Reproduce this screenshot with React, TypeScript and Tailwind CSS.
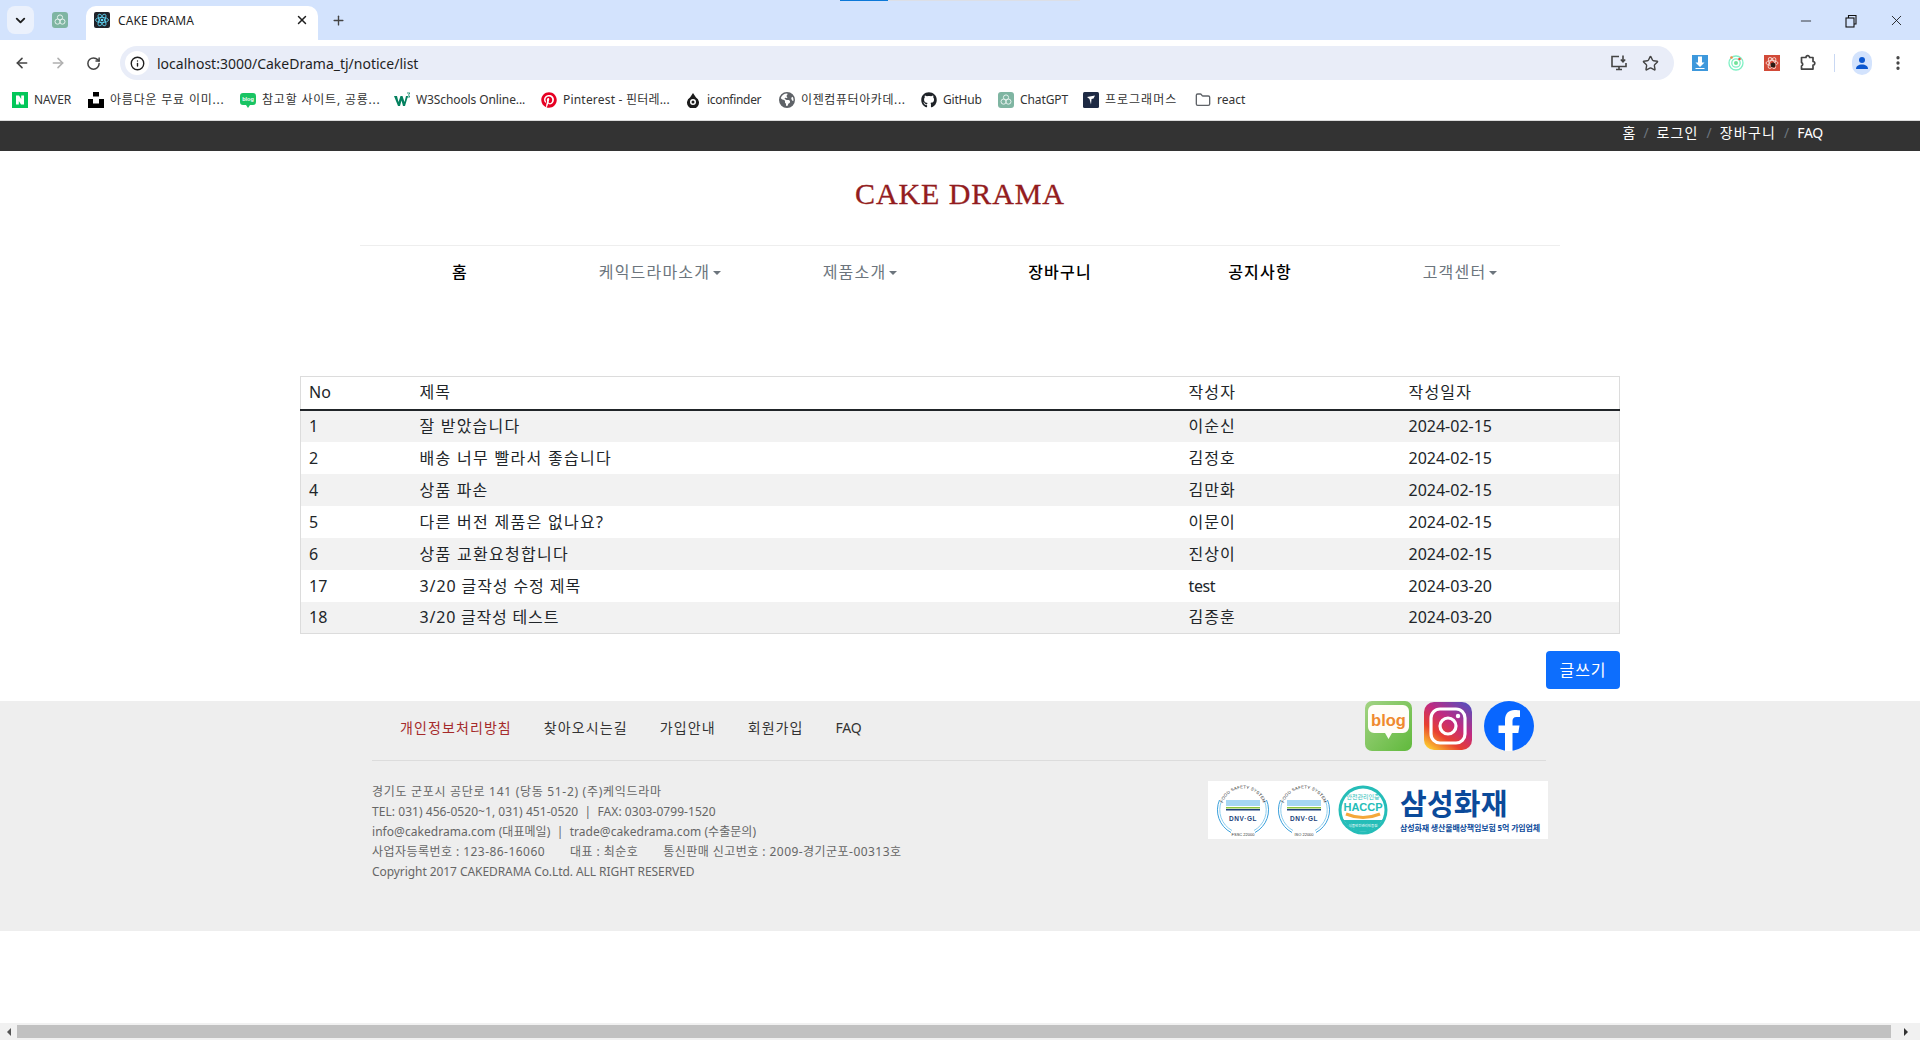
import { ArrowLeft, ArrowRight, ChevronDown, EllipsisVertical, Folder, Info, Minus, Plus, RotateCw, Star, X } from "lucide-react"
import { FaGithub, FaPinterest, FaEarthAmericas } from "react-icons/fa6"

const notices = [
  { no: 1, title: "잘 받았습니다", writer: "이순신", date: "2024-02-15", tt: "tracking-[1.2px]", wt: "tracking-[1px]" },
  { no: 2, title: "배송 너무 빨라서 좋습니다", writer: "김정호", date: "2024-02-15", tt: "tracking-[1.3px]", wt: "tracking-[1px]" },
  { no: 4, title: "상품 파손", writer: "김만화", date: "2024-02-15", tt: "tracking-[1.2px]", wt: "tracking-[1px]" },
  { no: 5, title: "다른 버전 제품은 없나요?", writer: "이문이", date: "2024-02-15", tt: "tracking-[1.3px]", wt: "tracking-[1px]" },
  { no: 6, title: "상품 교환요청합니다", writer: "진상이", date: "2024-02-15", tt: "tracking-[1.3px]", wt: "tracking-[1px]" },
  { no: 17, title: "3/20 글작성 수정 제목", writer: "test", date: "2024-03-20", tt: "tracking-[0.9px]", wt: "tracking-[-0.4px]" },
  { no: 18, title: "3/20 글작성 테스트", writer: "김종훈", date: "2024-03-20", tt: "tracking-[0.8px]", wt: "tracking-[1px]" },
]

const menu = [
  { name: "홈", cls: "text-black font-medium" },
  { name: "케익드라마소개", cls: "text-[#6c757d]", drop: true },
  { name: "제품소개", cls: "text-[#6c757d]", drop: true },
  { name: "장바구니", cls: "text-black font-medium" },
  { name: "공지사항", cls: "text-black font-medium" },
  { name: "고객센터", cls: "text-[#6c757d]", drop: true },
]

function GptIcon({ size = 16 }: { size?: number }) {
  return (
    <svg width={size} height={size} viewBox="0 0 16 16">
      <rect width="16" height="16" rx="3" fill="#7fb5a2" />
      <g fill="none" stroke="#e6f2ee" strokeWidth="1">
        <circle cx="8" cy="5.5" r="2.6" />
        <circle cx="5.6" cy="9.6" r="2.6" />
        <circle cx="10.4" cy="9.6" r="2.6" />
      </g>
    </svg>
  )
}

function ReactIcon() {
  return (
    <svg width="16" height="16" viewBox="0 0 16 16">
      <rect width="16" height="16" rx="2" fill="#20232a" />
      <g fill="none" stroke="#61dafb" strokeWidth="0.8">
        <ellipse cx="8" cy="8" rx="6.5" ry="2.6" />
        <ellipse cx="8" cy="8" rx="6.5" ry="2.6" transform="rotate(60 8 8)" />
        <ellipse cx="8" cy="8" rx="6.5" ry="2.6" transform="rotate(120 8 8)" />
      </g>
      <circle cx="8" cy="8" r="1.3" fill="#61dafb" />
    </svg>
  )
}

function BookmarkIcon({ kind }: { kind: string }) {
  if (kind === "naver")
    return (
      <svg width="16" height="16" viewBox="0 0 16 16">
        <rect width="16" height="16" fill="#03c75a" />
        <path d="M4 3.5h3l2.2 3.6V3.5H12v9H9l-2.2-3.6v3.6H4z" fill="#fff" />
      </svg>
    )
  if (kind === "unsplash")
    return (
      <svg width="16" height="16" viewBox="0 0 16 16">
        <path d="M5 0h6v4.5H5zM0 7h5v4.500h6V7h5v9H0z" fill="#000" />
      </svg>
    )
  if (kind === "blog")
    return (
      <svg width="16" height="16" viewBox="0 0 16 16">
        <path d="M3 1h10a3 3 0 0 1 3 3v6a3 3 0 0 1-3 3h-3l-2 3-2-3H3a3 3 0 0 1-3-3V4a3 3 0 0 1 3-3z" fill="#19c463" />
        <text x="8" y="9" textAnchor="middle" fontSize="5.500" fontWeight="700" fill="#fff" fontFamily="Liberation Sans">blog</text>
      </svg>
    )
  if (kind === "w3")
    return (
      <svg width="16" height="16" viewBox="0 0 16 16">
        <path d="M0 4h3l1.500 6L6.500 4h2l2 6L12 4h2l-3 10H9L7.500 8.500 6 14H4z" fill="#04815f" />
        <path d="M13 1h3l-1.500 2L16 5h-3" fill="none" stroke="#04815f" strokeWidth="0.8" />
      </svg>
    )
  if (kind === "pinterest") return <FaPinterest size={16} color="#e60023" />
  if (kind === "iconfinder")
    return (
      <svg width="16" height="16" viewBox="0 0 16 16">
        <path d="M8 1l3 4.500a6 6 0 1 1-6 0z" fill="#1b1b1b" />
        <circle cx="8" cy="10" r="3" fill="#fff" />
        <circle cx="8" cy="10" r="1.500" fill="#1b1b1b" />
      </svg>
    )
  if (kind === "globe") return <FaEarthAmericas size={16} color="#5f6368" />
  if (kind === "github") return <FaGithub size={16} color="#1f2328" />
  if (kind === "gpt") return <GptIcon />
  if (kind === "programmers")
    return (
      <svg width="16" height="16" viewBox="0 0 16 16">
        <rect width="16" height="16" rx="1.500" fill="#1e2a44" />
        <path d="M4 5l8-1.500-1.500 3L8.500 7 8 12.500 6.500 7z" fill="#fff" />
      </svg>
    )
  return <Folder size={16} color="#5f6368" strokeWidth={2} />
}

const bookmarks = [
  { kind: "naver", text: "NAVER", w: "w-[76px]", t: "tracking-[-0.1px]" },
  { kind: "unsplash", text: "아름다운 무료 이미...", w: "w-[152px]", t: "tracking-[0.8px]" },
  { kind: "blog", text: "참고할 사이트, 공룡...", w: "w-[154px]", t: "tracking-[0.8px]" },
  { kind: "w3", text: "W3Schools Online...", w: "w-[147px]", t: "tracking-[-0.1px]" },
  { kind: "pinterest", text: "Pinterest - 핀터레...", w: "w-[144px]", t: "tracking-[0.2px]" },
  { kind: "iconfinder", text: "iconfinder", w: "w-[94px]", t: "tracking-[-0.3px]" },
  { kind: "globe", text: "이젠컴퓨터아카데...", w: "w-[142px]", t: "tracking-[0.6px]" },
  { kind: "github", text: "GitHub", w: "w-[77px]", t: "tracking-[-0.2px]" },
  { kind: "gpt", text: "ChatGPT", w: "w-[85px]", t: "tracking-[-0.1px]" },
  { kind: "programmers", text: "프로그래머스", w: "w-[112px]", t: "tracking-[1px]" },
  { kind: "folder", text: "react", w: "w-[60px]", t: "tracking-normal" },
]

function Address() {
  return (
    <div className="mt-[1px] text-[12px] leading-[20px] text-[#666]">
      <p className="tracking-[0.7px]">경기도 군포시 공단로 141 (당동 51-2) (주)케익드라마</p>
      <p className="tracking-[0.05px]">TEL: 031) 456-0520~1, 031) 451-0520 &nbsp;|&nbsp; FAX: 0303-0799-1520</p>
      <p className="tracking-[0.05px]">info@cakedrama.com (대표메일) &nbsp;|&nbsp; trade@cakedrama.com (수출문의)</p>
      <p className="tracking-[0.45px]">사업자등록번호 : 123-86-16060 &nbsp; &nbsp; &nbsp; 대표 : 최순호 &nbsp; &nbsp; &nbsp; 통신판매 신고번호 : 2009-경기군포-00313호</p>
      <p className="tracking-[-0.07px]">Copyright 2017 CAKEDRAMA Co.Ltd. ALL RIGHT RESERVED</p>
    </div>
  )
}

function Social() {
  return (
    <div className="flex items-center gap-[12px] pr-[12px]">
      <svg width="47" height="50" viewBox="0 0 47 50">
        <defs>
          <linearGradient id="blogbg" x1="0" y1="0" x2="1" y2="1">
            <stop offset="0" stopColor="#a3d383" />
            <stop offset="1" stopColor="#60b93c" />
          </linearGradient>
        </defs>
        <rect width="47" height="50" rx="7" fill="url(#blogbg)" />
        <path d="M9 4h29a6 6 0 0 1 6 6v16a6 6 0 0 1-6 6H27l-3.500 6-3.500-6H9a6 6 0 0 1-6-6V10a6 6 0 0 1 6-6z" fill="#fffdf8" />
        <text x="23.500" y="25" textAnchor="middle" fontSize="16.500" fontWeight="700" fill="#ef8a2e" fontFamily="Liberation Sans">blog</text>
      </svg>
      <svg width="48" height="48" viewBox="0 0 48 48">
        <defs>
          <linearGradient id="igbg" x1="0.15" y1="1" x2="0.85" y2="0">
            <stop offset="0" stopColor="#fdcb2e" />
            <stop offset="0.3" stopColor="#e8402f" />
            <stop offset="0.6" stopColor="#c22a80" />
            <stop offset="1" stopColor="#5a4dbb" />
          </linearGradient>
        </defs>
        <rect width="48" height="48" rx="10" fill="url(#igbg)" />
        <rect x="7" y="7" width="34" height="34" rx="9" fill="none" stroke="#fff" strokeWidth="3.200" />
        <circle cx="24" cy="24" r="8" fill="none" stroke="#fff" strokeWidth="3.200" />
        <circle cx="34" cy="14" r="2.200" fill="#fff" />
      </svg>
      <svg width="50" height="50" viewBox="0 0 50 50">
        <circle cx="25" cy="25" r="25" fill="#0866ff" />
        <path d="M21 50V32h-6.500v-7.500H21v-5.500c0-6.500 3.800-10 9.500-10 2.800 0 5 .3 5.500.4v6.500h-3.500c-3 0-4 1.900-4 3.900v4.700h7l-1.200 7.500H28.500v18a25 25 0 0 1-7.500 0z" fill="#fff" />
      </svg>
    </div>
  )
}

function SafetySeal({ id, label }: { id: string; label: string }) {
  return (
    <svg width="54" height="54" viewBox="0 0 54 54">
      <defs>
        <path id={id} d="M5.500 27A21.500 21.500 0 0 1 48.500 27" />
      </defs>
      <g fill="none" stroke="#3aa0dc" strokeWidth="1">
        <path d="M3.500 17A25.500 25.500 0 0 0 15 49.500" />
        <path d="M50.500 17A25.500 25.500 0 0 1 39 49.500" />
      </g>
      <g fill="none" stroke="#8ccdee" strokeWidth="1">
        <path d="M5.500 18A23.500 23.500 0 0 0 16 47.500" />
        <path d="M48.500 18A23.500 23.500 0 0 1 38 47.500" />
      </g>
      <text fontSize="4.300" fill="#333" fontFamily="Liberation Sans" letterSpacing="0.2">
        <textPath href={`#${id}`} startOffset="50%" textAnchor="middle">FOOD SAFETY SYSTEM</textPath>
      </text>
      <rect x="10" y="17" width="34" height="6" fill="#a5d6f2" />
      <rect x="10" y="24" width="34" height="1.500" fill="#8cc63f" />
      <rect x="10" y="26" width="34" height="1.500" fill="#1c3f78" />
      <text x="27" y="37.500" textAnchor="middle" fontSize="6.500" fontWeight="700" fill="#1c3f78" fontFamily="Liberation Sans" letterSpacing="0.5">DNV·GL</text>
      <text x="27" y="52.500" textAnchor="middle" fontSize="4" fill="#333" fontFamily="Liberation Sans">{label}</text>
    </svg>
  )
}

function Certificates() {
  return (
    <div className="flex items-center w-[340px] h-[58px] bg-white -mr-[2px] pl-[8px]">
      <SafetySeal id="seal-a" label="FSSC 22000" />
      <div className="ml-[7px]">
        <SafetySeal id="seal-b" label="ISO 22000" />
      </div>
      <svg className="ml-[7px]" width="50" height="50" viewBox="0 0 50 50">
        <circle cx="25" cy="25" r="24.500" fill="#25bdb8" />
        <circle cx="25" cy="25" r="21.500" fill="#fff" />
        <path d="M5.500 35a22 22 0 0 0 39 0z" fill="#25bdb8" />
        <text x="25" y="14" textAnchor="middle" fontSize="6" fill="#25bdb8">안전관리인증</text>
        <text x="25" y="26" textAnchor="middle" fontSize="11" fontWeight="700" fill="#25bdb8" fontFamily="Liberation Sans">HACCP</text>
        <path d="M8 29q17 7 34 0" fill="none" stroke="#f4a73a" strokeWidth="3" />
        <text x="25" y="42" textAnchor="middle" fontSize="3.500" fill="#fff">식품안전관리인증원</text>
      </svg>
      <div className="ml-[12px] flex flex-col gap-[2px] text-[#0b4a9a] font-bold">
        <span className="text-[29px] leading-[34px] tracking-[0.2px]">삼성화재</span>
        <span className="text-[8px] leading-[10px] whitespace-nowrap tracking-[-0.15px]">삼성화재 생산물배상책임보험 5억 가입업체</span>
      </div>
    </div>
  )
}

export default function App() {
  return (
    <div className="w-[1920px] h-[1040px] overflow-hidden flex flex-col bg-white relative [font-family:'Noto_Sans','Noto_Sans_CJK_KR',sans-serif]">
      {/* tab strip */}
      <div className="h-[40px] bg-[#d3e3fd] flex items-end relative shrink-0">
        <div className="absolute top-0 left-[840px] w-[48px] h-[1px] bg-[#0b78d8]" />
        <div className="absolute top-0 left-[888px] w-[192px] h-[1px] bg-[#dcdfe6]" />
        <div className="self-start mt-[6px] ml-[7px] w-[27px] h-[28px] rounded-[8px] bg-[#ebf1fc] flex items-center justify-center">
          <ChevronDown size={15} strokeWidth={3} color="#1f1f1f" />
        </div>
        <div className="self-start mt-[12px] ml-[18px] w-[16px]">
          <GptIcon />
        </div>
        <div className="ml-[18px] w-[232px] h-[34px] bg-white rounded-t-[10px] flex items-center pl-[8px] pr-[9px] pb-[6px]">
          <ReactIcon />
          <span className="ml-[8px] mt-[1px] text-[12px] text-[#1f1f1f] flex-1 tracking-[0.1px]">CAKE DRAMA</span>
          <X size={14} strokeWidth={2.5} color="#1f1f1f" />
        </div>
        <div className="self-start mt-[13px] ml-[13px]">
          <Plus size={15} strokeWidth={2.2} color="#444" />
        </div>
        <div className="ml-auto self-start mt-[12px] flex items-center gap-[29px] pr-[15px] text-[#111]">
          <Minus size={16} strokeWidth={1.2} />
          <svg width="16" height="16" viewBox="0 0 16 16" fill="none" stroke="#111" strokeWidth="1.100">
            <rect x="3" y="5" width="8" height="9" />
            <path d="M5.500 5V2.500h7.500V11h-2" />
          </svg>
          <X size={17} strokeWidth={1.2} />
        </div>
      </div>

      {/* toolbar */}
      <div className="h-[46px] bg-white rounded-t-[8px] flex items-start pt-[6px] shrink-0 relative">
        <div className="w-[120px] h-[34px] flex items-center pl-[14px] gap-[20px]">
          <ArrowLeft size={16} strokeWidth={2.4} color="#444" />
          <ArrowRight size={16} strokeWidth={2.4} color="#b0b0b0" />
          <RotateCw size={15} strokeWidth={2.4} color="#444" />
        </div>
        <div className="w-[1554px] h-[34px] rounded-full bg-[#e9edf8] flex items-center pl-[5px]">
          <div className="w-[24px] h-[24px] rounded-full bg-white flex items-center justify-center">
            <Info size={15} strokeWidth={2.2} color="#1f1f1f" />
          </div>
          <span className="ml-[8px] text-[14px] text-[#1f1f1f] flex-1">localhost:3000/CakeDrama_tj/notice/list</span>
          <svg width="18" height="18" viewBox="0 0 18 18" fill="none" stroke="#444" strokeWidth="1.600">
            <path d="M9 2.500H2v10h14V9" />
            <path d="M6 15.500h6M9 12.500v3" />
            <path d="M13 1.500v6M10.800 5.500 13 7.800l2.200-2.300" />
          </svg>
          <Star className="ml-[14px] mr-[15px]" size={17} strokeWidth={2} color="#444" />
        </div>
        <div className="flex items-center h-[34px]">
          <svg className="ml-[18px]" width="16" height="16" viewBox="0 0 16 16">
            <rect width="16" height="16" fill="#3d98dc" />
            <path d="M6 1.500h4v6h2.500L8 12 3.500 7.500H6zM3.500 13h9v1h-9z" fill="#fff" />
          </svg>
          <svg className="ml-[20px]" width="16" height="16" viewBox="0 0 16 16" fill="none">
            <circle cx="8" cy="8" r="7" stroke="#7ff0c4" strokeWidth="1.300" />
            <circle cx="8" cy="8" r="4.200" stroke="#7ff0c4" strokeWidth="1.300" />
            <circle cx="8" cy="8" r="2" fill="#72e29a" />
            <circle cx="3.500" cy="2.500" r="1.300" fill="#f08a4b" />
            <circle cx="11.500" cy="4" r="1.300" fill="#ee4b3a" />
          </svg>
          <svg className="ml-[20px]" width="16" height="16" viewBox="0 0 16 16">
            <rect width="16" height="16" fill="#d24a38" />
            <g fill="none" stroke="#f6d8d2" strokeWidth="0.900">
              <ellipse cx="8" cy="8" rx="6" ry="2.500" />
              <ellipse cx="8" cy="8" rx="6" ry="2.500" transform="rotate(60 8 8)" />
              <ellipse cx="8" cy="8" rx="6" ry="2.500" transform="rotate(120 8 8)" />
            </g>
            <circle cx="9" cy="10" r="2.500" fill="#2a1a14" />
          </svg>
          <svg className="ml-[19px]" width="18" height="18" viewBox="0 0 18 18" fill="none" stroke="#444" strokeWidth="1.700">
            <path d="M2.500 3.500H7a1.800 1.800 0 0 1 3.600 0H14v4a1.800 1.800 0 0 1 0 3.600v4H2.500V12a1.800 1.800 0 0 0 0-3.400z" strokeLinejoin="round" />
          </svg>
          <div className="ml-[17px] w-[1px] h-[18px] bg-[#c9d8f3]" />
          <div className="ml-[17px] w-[20px] h-[24px] rounded-full bg-[#d3e3fd] flex items-center justify-center">
            <svg width="14" height="14" viewBox="0 0 14 14" fill="#0b57d0">
              <circle cx="7" cy="4" r="3" />
              <path d="M1 13c0-3 2.500-4.500 6-4.500s6 1.500 6 4.500z" />
            </svg>
          </div>
          <EllipsisVertical className="ml-[17px]" size={18} strokeWidth={2.4} color="#444" />
        </div>
      </div>

      {/* bookmarks */}
      <div className="h-[34px] bg-white flex items-center pl-[12px] pb-[6px] text-[12px] text-[#333] shrink-0">
        {bookmarks.map((b) => (
          <div key={b.text} className={`${b.w} flex items-center gap-[6px] whitespace-nowrap shrink-0`}>
            <BookmarkIcon kind={b.kind} />
            <span className={b.t}>{b.text}</span>
          </div>
        ))}
      </div>
      <div className="h-[1px] bg-[#dcdcdc] shrink-0" />

      {/* top util bar */}
      <div className="h-[30px] bg-[#333] flex items-center justify-end pr-[97px] pb-[7px] text-[14px] text-white shrink-0">
        <span>홈</span>
        <span className="mx-[8px] text-[#6c757d]">/</span>
        <span className="tracking-[1.1px]">로그인</span>
        <span className="mx-[8px] text-[#6c757d]">/</span>
        <span className="tracking-[1.2px]">장바구니</span>
        <span className="mx-[8px] text-[#6c757d]">/</span>
        <span className="tracking-[-0.3px]">FAQ</span>
      </div>

      {/* logo */}
      <div className="h-[94px] flex items-center justify-center pb-[10px] shrink-0">
        <span className="text-[30px] text-[#931c20] [font-family:'Liberation_Serif',serif] tracking-[0.9px] [-webkit-text-stroke:0.3px_#931c20]">CAKE DRAMA</span>
      </div>

      {/* menu */}
      <nav className="w-[1200px] mx-auto h-[55px] border-t border-[#eeeeee] grid grid-cols-6 pb-[2px] shrink-0">
        {menu.map((m) => (
          <div key={m.name} className={`flex items-center justify-center text-[16px] tracking-[1.2px] ${m.cls}`}>
            {m.name}
            {m.drop && <span className="ml-[3px] mt-[1px] border-x-[4px] border-x-transparent border-t-[4px] border-t-[#6c757d]" />}
          </div>
        ))}
      </nav>

      {/* list */}
      <main className="w-[1320px] ml-[300px] mt-[76px] shrink-0">
        <table className="w-full border border-[#dcdcdc] border-collapse text-[16px] text-[#212529] table-fixed">
          <thead>
            <tr className="h-[33px] border-b-2 border-[#212529]">
              <th className="w-[111px] px-[8px] pb-[1px] text-left font-normal">No</th>
              <th className="w-[769px] px-[8px] pb-[1px] text-left font-normal tracking-[1px]">제목</th>
              <th className="w-[220px] px-[8px] pb-[1px] text-left font-normal tracking-[1.1px]">작성자</th>
              <th className="px-[8px] pb-[1px] text-left font-normal tracking-[1.2px]">작성일자</th>
            </tr>
          </thead>
          <tbody>
            {notices.map((n) => (
              <tr key={n.no} className="h-[32px] odd:bg-[#f2f2f2]">
                <td className="px-[8px]">{n.no}</td>
                <td className={`px-[8px] ${n.tt}`}>{n.title}</td>
                <td className={`px-[8px] ${n.wt}`}>{n.writer}</td>
                <td className="px-[8px]">{n.date}</td>
              </tr>
            ))}
          </tbody>
        </table>
        <div className="flex justify-end mt-[17px] mb-[12px]">
          <button className="w-[74px] h-[38px] rounded-[4px] bg-[#0d6efd] text-white text-[16px] tracking-[1px]">글쓰기</button>
        </div>
      </main>

      {/* footer */}
      <footer className="h-[230px] bg-[#eeeeee] pl-[372px] pr-[374px] shrink-0">
        <div className="h-[60px] flex items-start justify-between border-b border-[#dcdcdc]">
          <div className="flex gap-[32px] pl-[28px] pt-[17px] text-[14px] leading-[20px] text-[#333] tracking-[1.1px]">
            <span className="text-[#a52a2a]">개인정보처리방침</span>
            <span>찾아오시는길</span>
            <span>가입안내</span>
            <span>회원가입</span>
            <span className="tracking-[-0.3px]">FAQ</span>
          </div>
          <Social />
        </div>
        <div className="flex justify-between items-start pt-[20px]">
          <Address />
          <Certificates />
        </div>
      </footer>

      <div className="flex-1" />

      {/* page scrollbar */}
      <div className="h-[17px] bg-[#f1f1f1] flex items-center shrink-0">
        <div className="w-[17px] flex justify-center">
          <span className="border-y-[4px] border-y-transparent border-r-[4px] border-r-[#555]" />
        </div>
        <div className="w-[1874px] h-[13px] bg-[#c1c1c1]" />
        <div className="flex-1 flex justify-center">
          <span className="border-y-[4px] border-y-transparent border-l-[4px] border-l-[#333]" />
        </div>
      </div>
    </div>
  )
}
